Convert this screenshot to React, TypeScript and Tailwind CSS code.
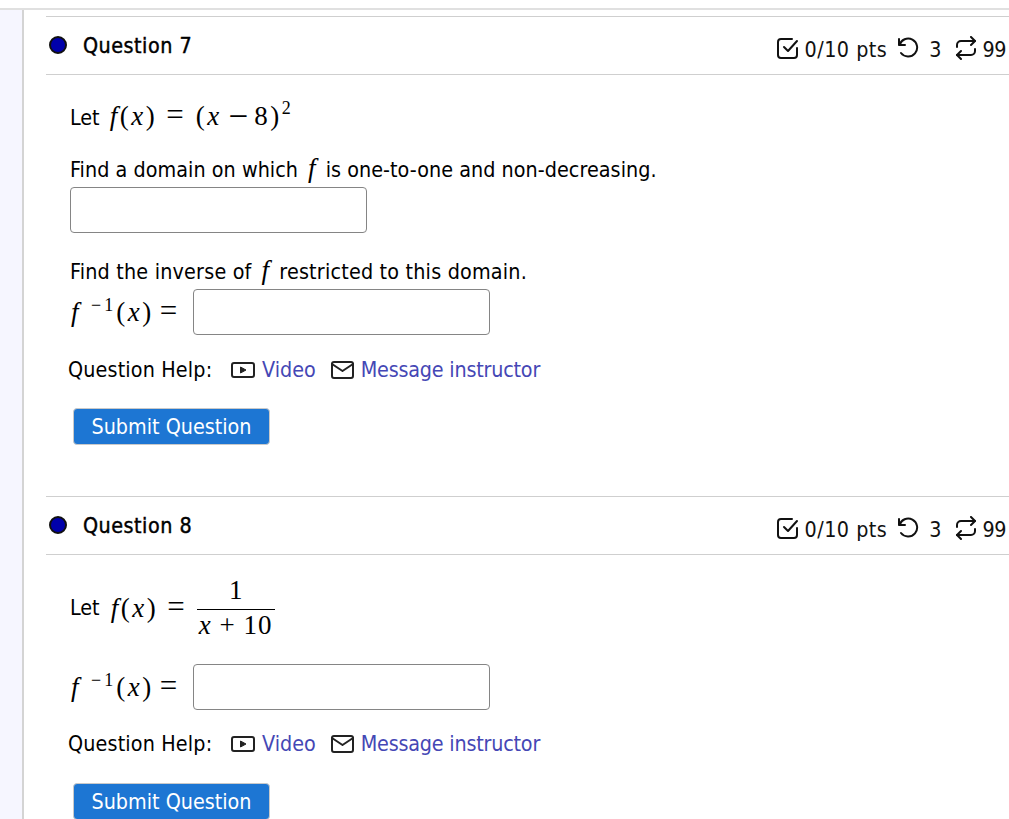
import React from 'react';

const textFont = "font-['DejaVu_Sans_Condensed','DejaVu_Sans',sans-serif]";
const mathFont = "font-['Liberation_Serif',serif]";

const CheckIcon = () => (
  <svg width="22" height="22" viewBox="0 0 22 22" fill="none" stroke="#111" strokeWidth="2" strokeLinecap="round" strokeLinejoin="round">
    <path d="M7 10l4 4 9-10" />
    <path d="M20 11v7a3 3 0 0 1-3 3H4a3 3 0 0 1-3-3V5a3 3 0 0 1 3-3h11" />
  </svg>
);

const RetryIcon = () => (
  <svg width="22" height="22" viewBox="0 0 22 22" fill="none" stroke="#111" strokeWidth="2" strokeLinecap="round" strokeLinejoin="round">
    <path d="M2 2v6h6" />
    <path d="M2.5 8A9 9 0 1 1 4 16" />
  </svg>
);

const RepeatIcon = () => (
  <svg width="22" height="24" viewBox="0 0 22 24" fill="none" stroke="#111" strokeWidth="2" strokeLinecap="round" strokeLinejoin="round">
    <path d="M16 1l4 4-4 4" />
    <path d="M2 11V9a4 4 0 0 1 4-4h14" />
    <path d="M6 23l-4-4 4-4" />
    <path d="M20 13v2a4 4 0 0 1-4 4H2" />
  </svg>
);

const VideoIcon = () => (
  <svg width="24" height="18" viewBox="0 0 24 18" fill="none" stroke="#222" strokeWidth="2" strokeLinejoin="round">
    <rect x="1" y="2" width="22" height="14" rx="2" />
    <path d="M9.5 6l5.5 3-5.5 3z" fill="#222" strokeWidth="1" />
  </svg>
);

const MailIcon = () => (
  <svg width="24" height="18" viewBox="0 0 24 18" fill="none" stroke="#222" strokeWidth="2" strokeLinecap="round" strokeLinejoin="round">
    <rect x="2" y="1" width="21" height="16" rx="2" />
    <path d="M2 3l10.5 7L23 3" />
  </svg>
);

const TextInput = () => (
  <input type="text" className="block w-[297px] h-[46px] bg-white border border-[#858585] rounded-[4px]" />
);

const Fn = () => (
  <span className={`${mathFont} text-[27px] text-black whitespace-nowrap tracking-[2.5px]`}>
    <i className="ml-[1px]">f</i>
    (<i>x</i>)<span className="ml-[9px] text-[31px] leading-none tracking-normal">=</span>
  </span>
);

const FnInverse = () => (
  <span className={`${mathFont} text-[27px] text-black whitespace-nowrap tracking-[2.5px]`}>
    <i className="ml-[1px]">f</i>
    <span className="text-[18px] ml-[10px] align-[10px] leading-none tracking-[3px]">−1</span>
    (<i>x</i>)<span className="ml-[6px] text-[31px] leading-none tracking-normal">=</span>
  </span>
);

const QuestionHeader = ({ n }: { n: number }) => (
  <div className="flex items-center h-[59px] border-y border-[#cfcfcf] text-black">
    <span className="w-[18px] h-[18px] ml-[3px] -mt-[1px] rounded-full bg-[#0000aa] border-2 border-[#111]" />
    <h3 className="ml-[16px] font-medium tracking-[0.5px] [-webkit-text-stroke:0.4px_black]">Question {n}</h3>
    <div className="ml-auto flex items-center text-[#111] pt-[6px]">
      <CheckIcon />
      <span className="ml-[5px] mt-[2px] tracking-[0.5px]">0/10 pts</span>
      <span className="ml-[10px]"><RetryIcon /></span>
      <span className="ml-[10px] mt-[2px]">3</span>
      <span className="ml-[13px]"><RepeatIcon /></span>
      <span className="ml-[6px] mr-[3px] mt-[2px] tracking-[-0.5px]">99</span>
    </div>
  </div>
);

const HelpRow = () => (
  <div className="flex items-center h-[28px] pt-[2px] text-[#4547b5]">
    <span className="text-black ml-[-2px] w-[163px] shrink-0 tracking-[0.15px]">Question Help:</span>
    <VideoIcon />
    <a className="ml-[7px]">Video</a>
    <span className="ml-[14px]"><MailIcon /></span>
    <a className="ml-[7px] tracking-[-0.2px]">Message instructor</a>
  </div>
);

const SubmitButton = () => (
  <button className="block ml-[3px] w-[197px] h-[37px] bg-[#1d76d3] border border-[#c9c9c9] rounded-[4px] text-white leading-none">
    Submit Question
  </button>
);

export default function App() {
  return (
    <div className={`${textFont} w-[1009px] h-[819px] overflow-hidden bg-white text-[21.33px] text-black`}>
      <div className="h-[10px] border-b-2 border-[#e0e0e0]" />
      <div className="flex h-[809px]">
        <div className="w-[24px] shrink-0 bg-[#f6f6ff] border-r-2 border-[#d4d4d4]" />
        <main className="flex-1 pl-[22px] pt-[6px]">
          <QuestionHeader n={7} />
          <div className="pl-[24px] pt-[21px]">
            <div className="flex items-baseline h-[52px] gap-[10px]">
              <span>Let</span>
              <span className={`${mathFont} text-[27px] whitespace-nowrap tracking-[2.5px]`}>
                <i>f</i>(<i>x</i>)<span className="ml-[9px] text-[31px] leading-none tracking-normal">=</span>
                <span className="ml-[12px]">(<i>x</i></span>
                <span className="ml-[7px] text-[35px] leading-none tracking-normal align-[-3px]">−</span>
                <span className="ml-[6px]">8)</span>
                <span className="text-[18px] leading-none align-[11px]">2</span>
              </span>
            </div>
            <p className="h-[39px] flex items-baseline gap-[10px] whitespace-nowrap tracking-[0.05px]">
              Find a domain on which <i className={`${mathFont} text-[27px]`}>f</i> is one-to-one and non-decreasing.
            </p>
            <TextInput />
            <p className="mt-[17px] h-[39px] flex items-baseline gap-[10px] whitespace-nowrap tracking-[0.2px]">
              Find the inverse of <i className={`${mathFont} text-[27px]`}>f</i> restricted to this domain.
            </p>
            <div className="flex items-center">
              <span className="w-[123px] shrink-0"><FnInverse /></span>
              <TextInput />
            </div>
            <div className="mt-[20px]"><HelpRow /></div>
            <div className="mt-[25px]"><SubmitButton /></div>
          </div>
          <div className="mt-[51px]">
            <QuestionHeader n={8} />
          </div>
          <div className="pl-[24px] pt-[17px]">
            <div className="flex items-center h-[72px] gap-[10px]">
              <span>Let</span>
              <Fn />
              <span className={`${mathFont} ml-[2px] flex flex-col items-center text-[27px] leading-[31px] w-[78px]`}>
                <span className="border-b border-black w-full text-center pb-[3px]">1</span>
                <span className="whitespace-nowrap tracking-[1px]"><i>x</i> + 10</span>
              </span>
            </div>
            <div className="flex items-center mt-[20px]">
              <span className="w-[123px] shrink-0"><FnInverse /></span>
              <TextInput />
            </div>
            <div className="mt-[19px]"><HelpRow /></div>
            <div className="mt-[26px]"><SubmitButton /></div>
          </div>
        </main>
      </div>
    </div>
  );
}
